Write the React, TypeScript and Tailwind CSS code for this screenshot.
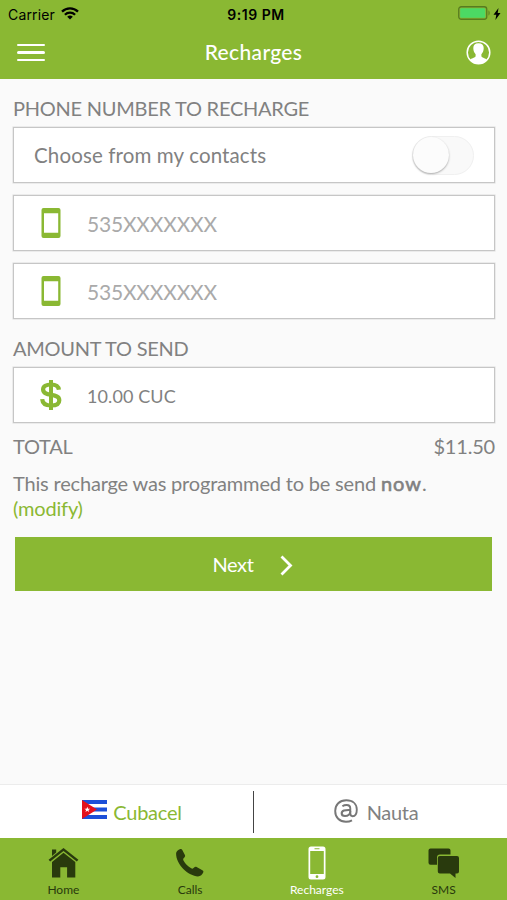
import { useState } from "react"
import type { ReactNode } from "react"

function SmartphoneIcon() {
  return (
    <svg width="20" height="30" viewBox="0 0 20 30">
      <path
        fill="#8ab833"
        fillRule="evenodd"
        d="M2.500 0h15A2 2 0 0 1 19.500 2v26a2 2 0 0 1-2 2h-15a2 2 0 0 1-2-2V2a2 2 0 0 1 2-2zM3 5.300v19.400h14.200V5.300z"
      />
    </svg>
  )
}

function CubaFlag() {
  return (
    <svg className="-mt-[4px]" width="25" height="19" viewBox="0 0 25 19">
      <path fill="#fff" d="M0 0h25v19H0z" />
      <path fill="#1c4fd8" d="M0 0h25v4H0zM0 7.500h25v4H0zM0 15h25v4H0z" />
      <path fill="#e3101c" d="M0 0l15 9.500L0 19z" />
      <path
        fill="#fff"
        d="M5.300 6.700l.8 2h2.100l-1.700 1.300.6 2.100-1.800-1.300-1.800 1.300.6-2.100-1.700-1.300h2.100z"
      />
    </svg>
  )
}

function HomeIcon() {
  return (
    <svg className="ml-[2px]" width="32" height="32" viewBox="0 0 32 32" fill="#293a0d">
      <path d="M15.500 1L0.600 12.700l1.600 1.900L15.500 4.100l13.300 10.500 1.600-1.900z" />
      <path d="M4 2.500h4.200v3L4 9z" />
      <path d="M15.500 5.700L27.300 15v15.500h-8.200V20.300h-6.800v10.200H4V15z" />
    </svg>
  )
}

function CallIcon() {
  return (
    <svg width="32" height="32" viewBox="0 0 32 32" fill="#293a0d">
      <path d="M2.100 6.300C2.200 4.600 4.100 2.700 6.300 2.100c1-.2 1.500.1 2 1l2.600 5c.5 1 .2 1.700-.5 2.400-1.400 1.200-1.500 1.900-.8 3.200 1.700 3 4.400 5.800 7.600 7.600 1.200.7 1.900.5 2.900-.7.7-.9 1.500-1.100 2.500-.6l5.800 3.200c.9.500 1.200 1.100.9 2.100-.7 2.200-3 4.100-5.300 4.100C14.500 29.200 1.800 17.500 2.100 6.300z" />
    </svg>
  )
}

function RechargeIcon() {
  return (
    <svg width="18" height="34" viewBox="0 0 18 34">
      <path
        fill="#fff"
        fillRule="evenodd"
        d="M3 .5h12a2.500 2.500 0 0 1 2.500 2.500v28a2.500 2.500 0 0 1-2.500 2.500H3A2.500 2.500 0 0 1 .5 31V3A2.500 2.500 0 0 1 3 .5zM2.200 5v23h13.600V5zM6.500 2.300v.9h5v-.9zM9 29.300a1.400 1.400 0 1 0 0 2.800 1.400 1.400 0 0 0 0-2.800z"
      />
    </svg>
  )
}

function SmsIcon() {
  return (
    <svg width="32" height="32" viewBox="0 0 32 32" fill="#293a0d">
      <path d="M2.500 1.500h18a2 2 0 0 1 2 2v4H12a3 3 0 0 0-3 3v7.300H2.500a2 2 0 0 1-2-2V3.500a2 2 0 0 1 2-2z" />
      <path d="M11.800 9h17.200a2 2 0 0 1 2 2v13.500a2 2 0 0 1-2 2h-1.500V31L22 26.500H11.800a2 2 0 0 1-2-2V11a2 2 0 0 1 2-2z" />
    </svg>
  )
}

function Field({ icon, children }: { icon: ReactNode; children: ReactNode }) {
  return (
    <div className="flex h-14 items-center border border-[#c6c6c6] bg-white shadow-[0_0_0_0.500px_#dcdcdc]">
      <span className="flex w-[73px] justify-center">{icon}</span>
      {children}
    </div>
  )
}

function Tab({ icon, label, active }: { icon: ReactNode; label: string; active?: boolean }) {
  return (
    <button
      className={
        active
          ? "flex flex-1 flex-col items-center text-[12px] text-white"
          : "flex flex-1 flex-col items-center text-[12px] text-[#293a0d]"
      }
    >
      <span className="flex h-[50px] items-center">{icon}</span>
      <span className="-mt-[6px] leading-4">{label}</span>
    </button>
  )
}

export default function App() {
  const [contacts, setContacts] = useState(false)

  return (
    <div className="flex h-[900px] w-[507px] flex-col bg-[#fafafa] font-[Lato,sans-serif] text-[20px] text-[#818181]">
      <header className="h-[79px] bg-[#8ab833]">
        <div className="grid h-7 grid-cols-3 items-center pl-2 pr-[6px] font-[Inter,sans-serif] text-[14px] text-black">
          <div className="flex items-center gap-[6px]">
            <span className="tracking-[0.150px]">Carrier</span>
            <svg className="-mt-px" width="18" height="13" viewBox="0 0 18 13" fill="none" stroke="#000" strokeWidth="2.300">
              <path d="M1 4.700a11.500 11.500 0 0 1 16 0M3.900 7.700a7.300 7.300 0 0 1 10.200 0" />
              <path d="M9 12.500L6.200 9.800a4 4 0 0 1 5.600 0z" fill="#000" stroke="none" />
            </svg>
          </div>
          <span className="pl-[3px] text-center text-[14px] font-semibold tracking-[0.500px]">9:19 PM</span>
          <div className="flex items-center justify-end gap-[2px]">
            <svg className="-mt-[2px]" width="33" height="14" viewBox="0 0 33 14">
              <rect x=".75" y=".75" width="28" height="12.500" rx="2.500" fill="none" stroke="#577b20" strokeWidth="1.300" />
              <rect x="2.200" y="2.200" width="25" height="9.600" rx="1.200" fill="#4cd964" />
              <path d="M30.500 4.500c1.500.5 1.500 4.500 0 5z" fill="#577b20" />
            </svg>
            <svg className="-mt-px" width="8" height="12" viewBox="0 0 8 12">
              <path d="M5.500 0L.5 6.700h2.800L2.400 12l5.100-7H4.700z" />
            </svg>
          </div>
        </div>
        <div className="flex h-12 items-center justify-between px-4">
          <button aria-label="Menu" className="ml-px flex w-[28px] flex-col gap-[5px] pt-px">
            <span className="h-[2.500px] rounded bg-white" />
            <span className="h-[2.500px] rounded bg-white" />
            <span className="h-[2.500px] rounded bg-white" />
          </button>
          <h1 className="-ml-[4px] text-[21px] font-medium leading-6 tracking-[0.350px] text-white">Recharges</h1>
          <svg width="25" height="25" viewBox="0 0 25 25">
            <circle cx="12.500" cy="12.500" r="11.300" fill="none" stroke="#fff" strokeWidth="1.500" />
            <path
              fill="#fff"
              d="M12.500 3.200c3.500 0 5.200 1.900 5.200 4.900 0 2.900-1 4.900-2.300 6.100v2.100c.3 1.200 3.200 1.600 5.500 3.500-2 2.500-4.700 4-8.400 4s-6.400-1.500-8.400-4c2.300-1.900 5.200-2.300 5.500-3.500v-2.100C8.300 13 7.300 11 7.300 8.100c0-3 1.700-4.900 5.200-4.900z"
            />
          </svg>
        </div>
      </header>

      <main className="flex-1 pl-[13px] pr-3 pt-[17px]">
        <h2 className="mb-[7px] leading-6 tracking-[-0.250px]">PHONE NUMBER TO RECHARGE</h2>
        <div className="flex flex-col gap-3">
          <div className="flex h-14 items-center justify-between border border-[#c6c6c6] bg-white px-5 shadow-[0_0_0_0.500px_#dcdcdc]">
            <span className="pt-px text-[20.500px] tracking-[0.130px]">Choose from my contacts</span>
            <button
              role="switch"
              aria-checked={contacts}
              aria-label="Choose from my contacts"
              className="flex h-[39px] w-[62px] items-center rounded-full border border-[#f0f0f0] bg-[#f9f9f9]"
              onClick={() => setContacts(!contacts)}
            >
              <span
                className={
                  contacts
                    ? "ml-[24px] size-[36px] rounded-full bg-[#fcfcfc] shadow-[0_1px_2px_#aaa]"
                    : "size-[36px] rounded-full bg-[#fcfcfc] shadow-[0_1px_2px_#aaa]"
                }
              />
            </button>
          </div>
          <Field icon={<SmartphoneIcon />}>
            <input
              className="w-80 pt-[2px] text-[21px] tracking-[-0.200px] outline-none placeholder:text-[#aaaaaa]"
              placeholder="535XXXXXXX"
            />
          </Field>
          <Field icon={<SmartphoneIcon />}>
            <input
              className="w-80 pt-[2px] text-[21px] tracking-[-0.200px] outline-none placeholder:text-[#aaaaaa]"
              placeholder="535XXXXXXX"
            />
          </Field>
        </div>

        <h2 className="mb-[7px] mt-[17px] leading-6 tracking-[-0.250px]">AMOUNT TO SEND</h2>
        <Field
          icon={
            <svg width="22" height="30" viewBox="0 0 22 30" fill="none" stroke="#8ab833">
              <path d="M11 0v30" strokeWidth="4" />
              <path
                d="M18.900 9.800C18.500 6.300 15.500 4.500 11 4.500c-4.700 0-7.900 1.600-7.900 4.900 0 7.700 16.200 3.100 16.200 10.800 0 3.600-3.300 5.300-8.300 5.300-5.500 0-8.500-2.200-8.800-6.400"
                strokeWidth="4.200"
              />
            </svg>
          }
        >
          <span className="pt-[3px] text-[18px] tracking-[0.100px]">10.00 CUC</span>
        </Field>

        <div className="mt-[11px] flex justify-between leading-6">
          <span className="tracking-[-0.250px]">TOTAL</span>
          <span className="tracking-[-0.200px]">$11.50</span>
        </div>
        <p className="mt-[13px] leading-[25px] tracking-[-0.180px]">
          This recharge was programmed to be send{" "}
          <b className="font-normal tracking-[1px] [-webkit-text-stroke:0.600px_#818181]">now</b>.
          <br />
          <a className="text-[#8ab833]">(modify)</a>
        </p>
        <button className="ml-[2px] mt-4 flex h-[54px] w-[477px] items-center justify-center gap-[27px] bg-[#8ab833] pr-px text-white">
          <span className="tracking-[-0.400px]">Next</span>
          <svg className="mt-[2px]" width="13" height="21" viewBox="0 0 13 21" fill="none" stroke="#fff" strokeWidth="2.800">
            <path d="M1.500 1.500l9 9-9 9" />
          </svg>
        </button>
      </main>

      <div className="flex h-[54px] items-center border-t border-[#ececec] bg-white">
        <button className="flex w-[253px] items-center justify-center gap-[6px] pl-[11px] text-[#8ab833]">
          <CubaFlag />
          <span className="tracking-[-0.250px]">Cubacel</span>
        </button>
        <span className="h-[42px] w-px bg-[#444]" />
        <button className="flex w-[253px] items-center justify-center gap-[9px] pr-[9px]">
          <svg className="-mt-px" width="24" height="24" viewBox="0 0 24 24" fill="none" stroke="#777" strokeWidth="1.900">
            <path d="M18 21.300c-1.700.9-3.700 1.400-6 1.400C5.500 22.700 1.200 18.500 1.200 12S5.500 1.300 12.300 1.300C18.800 1.300 22.800 5 22.800 10.500c0 4-1.700 6.700-4.200 6.700-1.800 0-2.300-1.100-2.300-2.900V9.500c0-2.400-1.300-3.500-3.700-3.500-1.600 0-3 .4-4.200 1.300" />
            <path d="M16.300 11c-5.300-.2-8.600.4-8.600 3.200 0 1.800 1.300 2.800 3.300 2.800 3 0 5.300-1.900 5.300-4.800" strokeWidth="2.100" />
          </svg>
          <span className="tracking-[-0.300px]">Nauta</span>
        </button>
      </div>

      <nav className="flex h-[62px] bg-[#8ab833]">
        <Tab icon={<HomeIcon />} label="Home" />
        <Tab icon={<CallIcon />} label="Calls" />
        <Tab icon={<RechargeIcon />} label="Recharges" active />
        <Tab icon={<SmsIcon />} label="SMS" />
      </nav>
    </div>
  )
}
